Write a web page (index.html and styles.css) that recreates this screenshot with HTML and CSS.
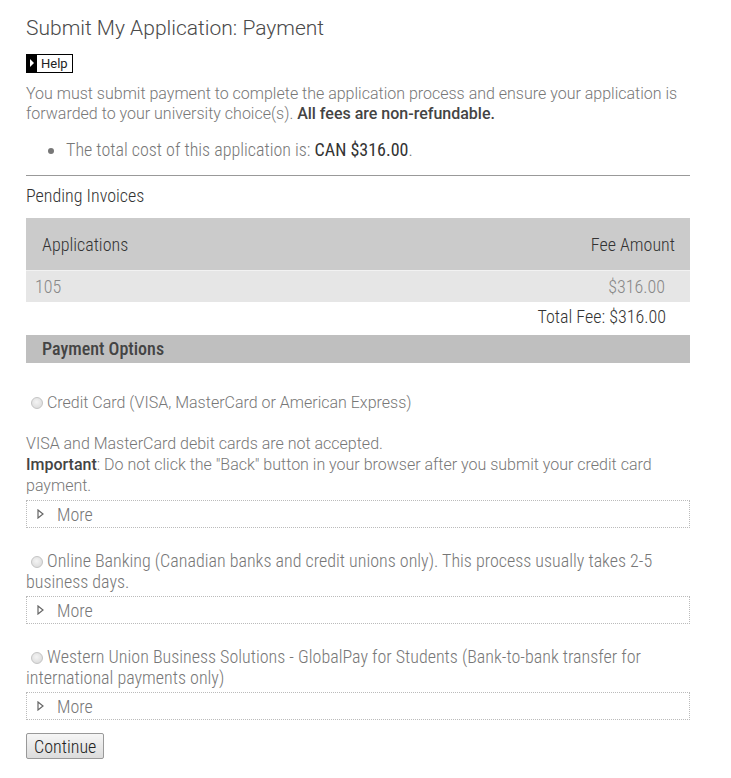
FILE: index.html
```html
<!DOCTYPE html>
<html lang="en">

<head>
  <meta charset="UTF-8">
  <meta name="viewport" content="width=device-width, initial-scale=1.0">
  <title>Submit My Application: Payment</title>
  <link rel="stylesheet" href="styles.css">
</head>

<body>
  <div class="page">
    <h1 class="title">Submit My Application: Payment</h1>

    <div class="help">
      <span class="help-icon"></span>
      <span class="help-text">Help</span>
    </div>

    <p class="intro">You must submit payment to complete the application process and ensure your application is
      forwarded to your university choice(s). <strong>All fees are non-refundable.</strong></p>

    <ul class="cost">
      <li>The total cost of this application is: <strong>CAN $316.00</strong>.</li>
    </ul>

    <hr class="divider">

    <h3 class="section-title">Pending Invoices</h3>

    <table class="invoices">
      <thead>
        <tr>
          <th class="col-app">Applications</th>
          <th class="col-fee">Fee Amount</th>
        </tr>
      </thead>
      <tbody>
        <tr>
          <td class="col-app">105</td>
          <td class="col-fee">$316.00</td>
        </tr>
      </tbody>
    </table>
    <div class="total">Total Fee: $316.00</div>

    <div class="options-bar">Payment Options</div>

    <form id="payment-form">
      <div class="option option-first">
        <label><input type="radio" name="method" value="cc"> Credit Card (VISA, MasterCard or American Express)</label>
      </div>
      <p class="note">VISA and MasterCard debit cards are not accepted.<br>
        <strong>Important</strong>: Do not click the "Back" button in your browser after you submit your credit card
        payment.</p>
      <div class="more">
        <svg class="arrow" width="7" height="10" viewBox="0 0 7 10"><path d="M1 1 L6 5 L1 9 Z" fill="none" stroke="#666" stroke-width="1.2"/></svg>
        <span>More</span>
      </div>

      <div class="option condensed">
        <label><input type="radio" name="method" value="bank"> Online Banking (Canadian banks and credit unions only). This process usually takes 2-5 business days.</label>
      </div>
      <div class="more">
        <svg class="arrow" width="7" height="10" viewBox="0 0 7 10"><path d="M1 1 L6 5 L1 9 Z" fill="none" stroke="#666" stroke-width="1.2"/></svg>
        <span>More</span>
      </div>

      <div class="option condensed">
        <label><input type="radio" name="method" value="wu"> Western Union Business Solutions - GlobalPay for Students (Bank-to-bank transfer for international payments only)</label>
      </div>
      <div class="more">
        <svg class="arrow" width="7" height="10" viewBox="0 0 7 10"><path d="M1 1 L6 5 L1 9 Z" fill="none" stroke="#666" stroke-width="1.2"/></svg>
        <span>More</span>
      </div>

      <button type="submit" class="continue">Continue</button>
    </form>
  </div>
</body>

</html>
```

FILE: styles.css
```css
body {
  margin: 0;
  font-family: Roboto, "Liberation Sans", sans-serif;
  font-weight: 300;
  font-size: 16px;
  color: #777;
  background: #fff;
}

.page {
  width: 664px;
  padding: 15px 0 0 26px;
}

.title {
  margin: 0;
  font-size: 21px;
  line-height: 26px;
  font-weight: 300;
  color: #4a4a4a;
}

.help {
  display: inline-flex;
  margin-top: 13px;
  height: 19px;
  border: 1px solid #000;
  box-sizing: border-box;
}

.help-icon {
  width: 10px;
  background: #000;
  position: relative;
}

.help-icon::after {
  content: '';
  position: absolute;
  left: 3px;
  top: 4px;
  border-left: 4px solid #fff;
  border-top: 4px solid transparent;
  border-bottom: 4px solid transparent;
}

.help-text {
  font-size: 13px;
  line-height: 17px;
  padding: 0 4px 0 4px;
  color: #222;
  font-weight: 400;
}

.intro {
  margin: 8px 0 0;
  line-height: 20px;
}

.intro strong,
.note strong {
  font-weight: 500;
  color: #444;
}

/* condensed text, like the site's Roboto Condensed */
.cost,
.section-title,
.invoices,
.total,
.options-bar,
.condensed,
.more,
.continue {
  font-stretch: condensed;
  font-size: 18px;
}

.cost {
  margin: 16px 0 0;
  padding-left: 40px;
  line-height: 20px;
}

.cost strong {
  font-weight: 400;
  color: #333;
}

.divider {
  margin: 15px 0 0;
  border: 0;
  border-top: 1px solid #999;
}

.section-title {
  margin: 10px 0 0;
  line-height: 20px;
  font-weight: 300;
  color: #333;
}

.invoices {
  width: 100%;
  margin-top: 12px;
  border-collapse: collapse;
}

.invoices th {
  background-color: #cbcbcb;
  height: 52px;
  padding: 0 15px 0 16px;
  font-weight: 300;
  color: #333;
  text-align: left;
}

.invoices th.col-fee {
  text-align: right;
}

.invoices td {
  background-color: #e6e6e6;
  height: 31px;
  padding: 0 25px 0 9px;
  border-top: 1px solid #f2f2f2;
  color: #888;
}

.invoices td.col-fee {
  text-align: right;
}

.total {
  text-align: right;
  padding-right: 24px;
  line-height: 30px;
  color: #333;
  font-weight: 300;
}

.options-bar {
  margin-top: 3px;
  background-color: #bfbfbf;
  height: 28px;
  line-height: 28px;
  padding-left: 16px;
  font-weight: 500;
  color: #444;
}

.option {
  line-height: 21px;
  margin-top: 22px;
}

.option-first {
  margin-top: 29px;
}

.option input {
  appearance: none;
  width: 12px;
  height: 12px;
  margin: 0 0 0 5px;
  vertical-align: -1px;
  border: 1px solid #c4c4c4;
  border-radius: 50%;
  background: radial-gradient(circle at 45% 40%, #f4f4f4, #d6d6d6);
}

.note {
  margin: 20px 0 0;
  line-height: 21px;
}

.more {
  margin-top: 4px;
  height: 28px;
  box-sizing: border-box;
  border: 1px dotted #bbb;
  padding-left: 10px;
  display: flex;
  align-items: center;
  gap: 13px;
}

.continue {
  margin-top: 13px;
  height: 26px;
  padding: 0 7px;
  font-family: inherit;
  font-weight: 300;
  color: #222;
  background: linear-gradient(#f6f6f6, #dcdcdc);
  border: 1px solid #999;
  border-radius: 2px;
}
```
